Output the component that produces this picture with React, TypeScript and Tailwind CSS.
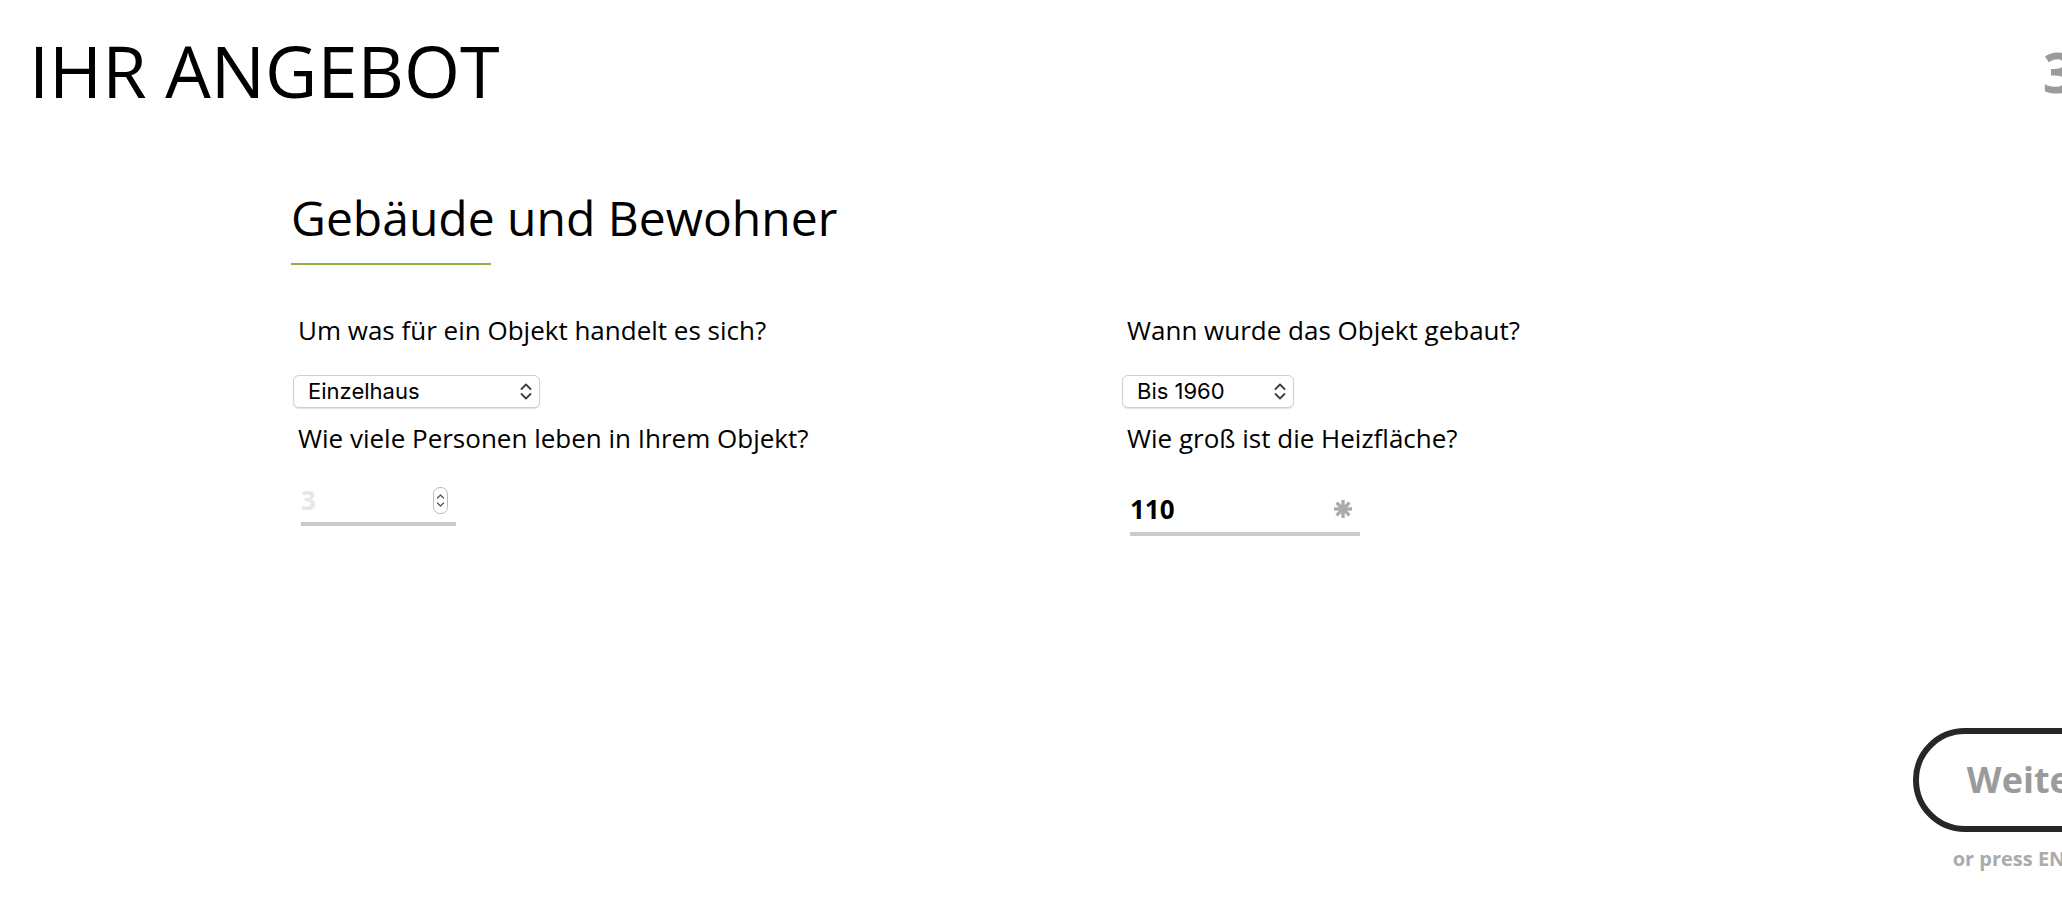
import React from "react";

function SelectChevrons() {
  return (
    <svg width="12" height="19" viewBox="0 0 12 19" fill="none">
      <path d="M1.5 7L6 2.5L10.5 7" stroke="#3d3d3d" strokeWidth="1.8" strokeLinecap="round" strokeLinejoin="round" />
      <path d="M1.5 12L6 16.5L10.5 12" stroke="#3d3d3d" strokeWidth="1.8" strokeLinecap="round" strokeLinejoin="round" />
    </svg>
  );
}

function FakeSelect({ value, width }: { value: string; width: string }) {
  return (
    <div
      className={`${width} h-[33px] flex items-center justify-between pl-[14px] pr-[7px] bg-white border border-[#cfcfcf] rounded-[6px] shadow-[0_1px_1px_rgba(0,0,0,0.12)] font-['Inter',sans-serif] text-[22px] text-black`}
    >
      <span>{value}</span>
      <SelectChevrons />
    </div>
  );
}

function Spinner() {
  return (
    <div className="w-[15px] h-[27px] rounded-[7px] border border-[#bdbdbd] flex items-center justify-center bg-white">
      <svg width="9" height="17" viewBox="0 0 9 17" fill="none">
        <path d="M1.5 6L4.5 3L7.5 6" stroke="#555" strokeWidth="1.3" strokeLinecap="round" strokeLinejoin="round" />
        <path d="M1.5 11L4.5 14L7.5 11" stroke="#555" strokeWidth="1.3" strokeLinecap="round" strokeLinejoin="round" />
      </svg>
    </div>
  );
}

function Asterisk() {
  return (
    <svg width="20" height="20" viewBox="0 0 20 20" fill="none">
      <g stroke="#aaaaaa" strokeWidth="3.4" strokeLinecap="butt">
        <path d="M10 1V19" />
        <path d="M1 10H19" />
        <path d="M3.6 3.6L16.4 16.4" />
        <path d="M16.4 3.6L3.6 16.4" />
      </g>
    </svg>
  );
}

export default function App() {
  return (
    <div className="w-full min-h-[900px] overflow-hidden bg-white text-black font-['Open_Sans',sans-serif]">
      <div className="w-[2141px]">
        <header className="flex justify-between pt-[34px] pl-[29px] pr-[11px]">
          <h1 className="text-[72px] leading-[72px] font-normal">IHR ANGEBOT</h1>
          <div className="mt-[9px] text-[56px] leading-[56px] font-bold text-[#9b9b9b]">3/4</div>
        </header>

        <section className="mt-[88px] pl-[291px]">
          <h2 className="text-[48px] leading-[48px] font-normal">Gebäude und Bewohner</h2>
          <div className="mt-[21px] h-[2px] w-[200px] bg-[#8db03f]" />

          <div className="mt-[47px] ml-[2px] grid grid-cols-[829px_auto]">
            <div className="flex flex-col items-start">
              <label className="pl-[5px] text-[26px] leading-[36px]">Um was für ein Objekt handelt es sich?</label>
              <div className="mt-[27px]">
                <FakeSelect value="Einzelhaus" width="w-[247px]" />
              </div>
              <label className="mt-[12px] pl-[5px] text-[26px] leading-[36px]">Wie viele Personen leben in Ihrem Objekt?</label>
              <div className="mt-[29px] ml-[8px] w-[155px] flex items-center justify-between pr-[8px] pb-[7px] border-b-4 border-[#cacaca]">
                <span className="text-[26px] leading-[30px] font-bold text-[#e6e6e6]">3</span>
                <Spinner />
              </div>
            </div>

            <div className="flex flex-col items-start">
              <label className="pl-[5px] text-[26px] leading-[36px]">Wann wurde das Objekt gebaut?</label>
              <div className="mt-[27px]">
                <FakeSelect value="Bis 1960" width="w-[172px]" />
              </div>
              <label className="mt-[12px] pl-[5px] text-[26px] leading-[36px]">Wie groß ist die Heizfläche?</label>
              <div className="mt-[38px] ml-[8px] w-[230px] flex items-center justify-between pr-[7px] pb-[8px] border-b-4 border-[#cacaca]">
                <span className="text-[26px] leading-[30px] font-bold text-black">110</span>
                <Asterisk />
              </div>
            </div>
          </div>
        </section>

        <div className="mt-[192px] flex justify-end">
          <div className="flex flex-col items-center w-[228px]">
            <button className="w-[228px] h-[104px] rounded-full border-[6px] border-[#26272b] bg-white text-[36px] font-bold text-[#9b9b9b]">
              Weiter
            </button>
            <div className="mt-[15px] text-[20px] leading-[24px] font-bold text-[#ababab] whitespace-nowrap">or press ENTER</div>
          </div>
        </div>
      </div>
    </div>
  );
}
